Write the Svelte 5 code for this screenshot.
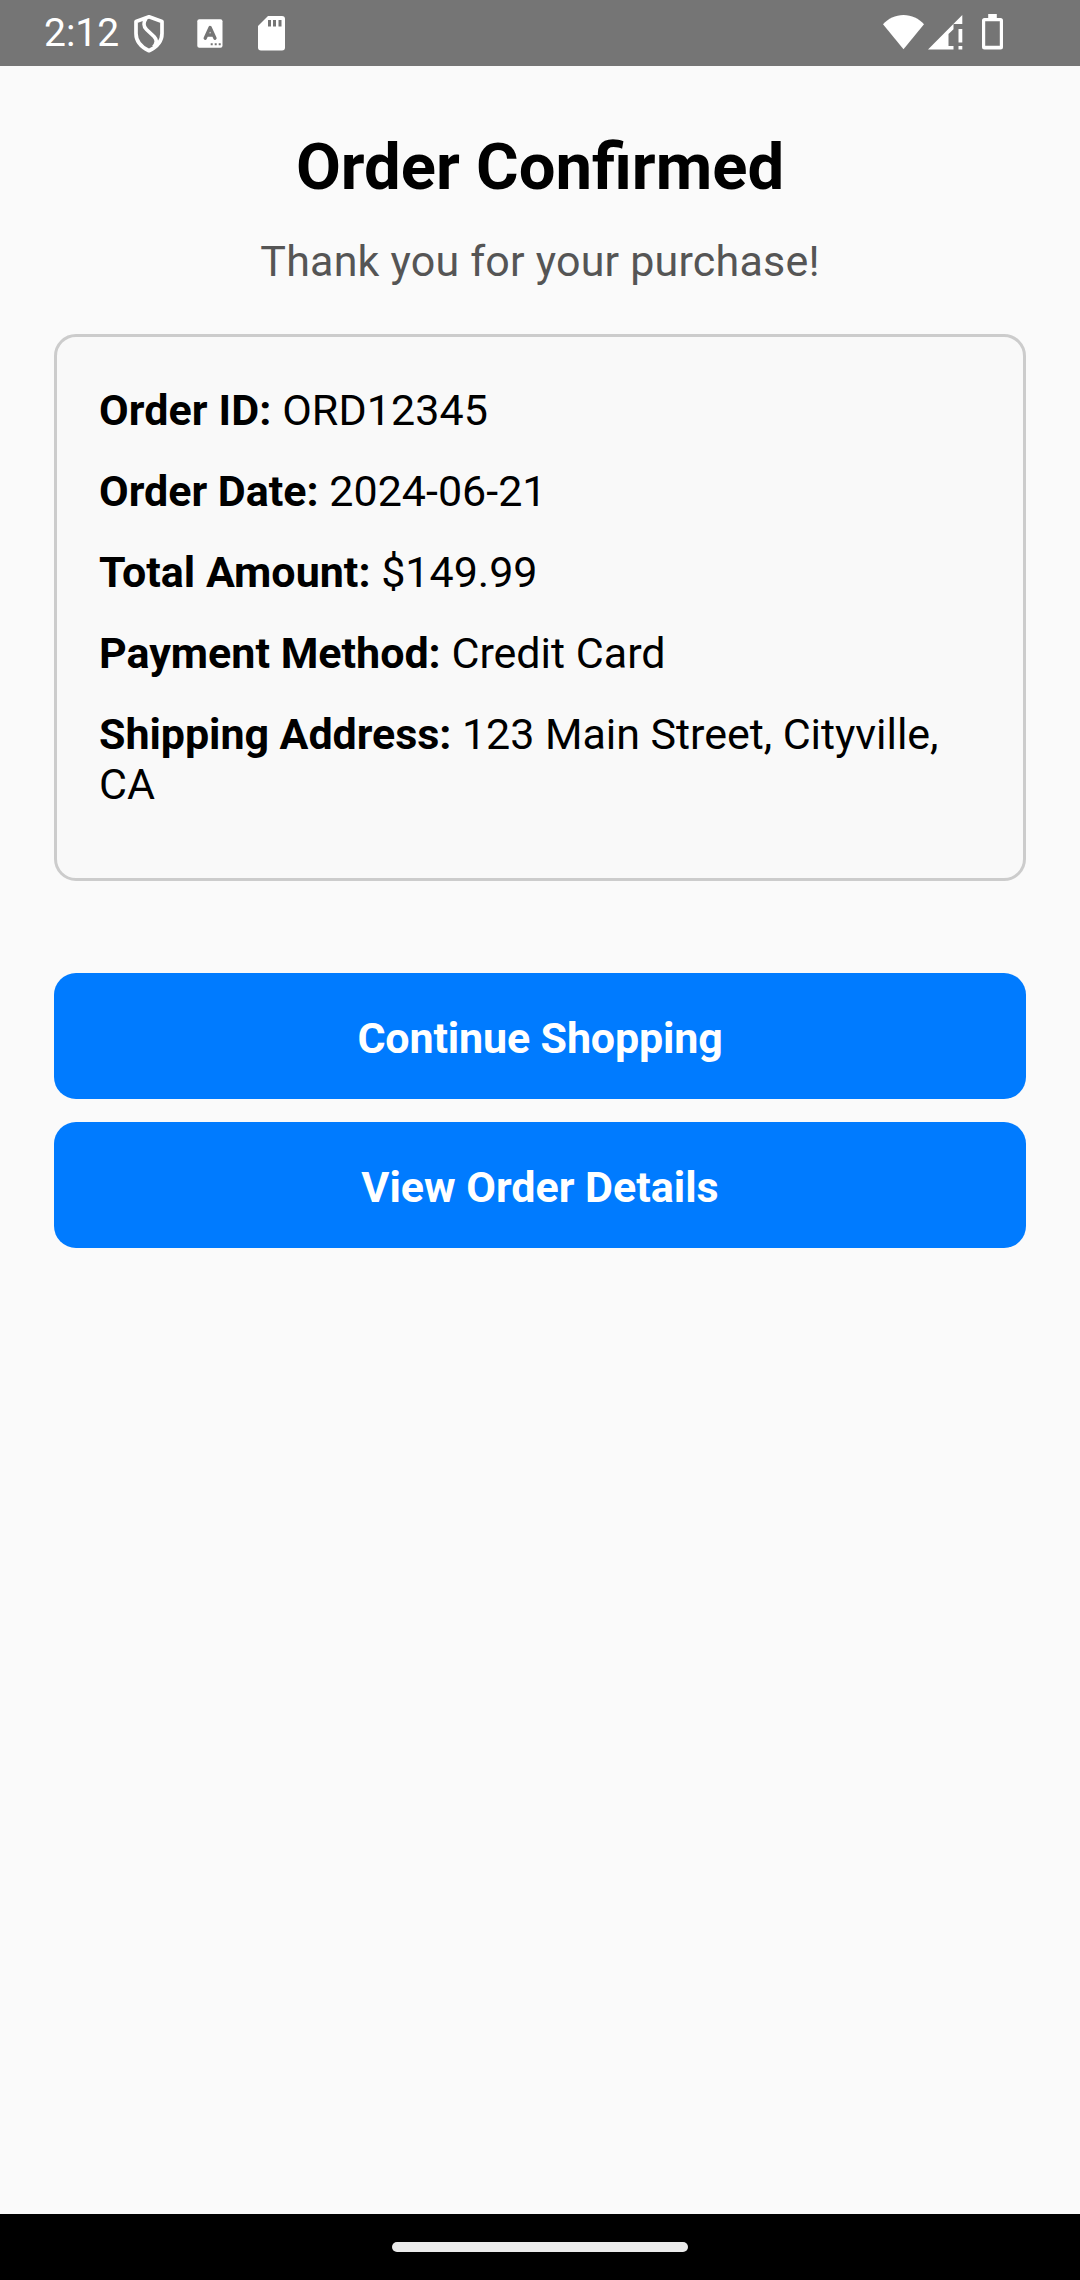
<script>
  const details = [
    { label: 'Order ID:', value: 'ORD12345' },
    { label: 'Order Date:', value: '2024-06-21' },
    { label: 'Total Amount:', value: '$149.99' },
    { label: 'Payment Method:', value: 'Credit Card' },
    { label: 'Shipping Address:', value: '123 Main Street, Cityville, CA' }
  ];
  const actions = ['Continue Shopping', 'View Order Details'];
</script>

<div class="screen">
  <header class="status">
    <div class="left">
      <span class="time">2:12</span>
      <svg class="shield" width="32" height="40" viewBox="0 0 32 40" fill="none" stroke="#fff" stroke-width="3.700" stroke-linejoin="round">
        <path d="M16 3.800 29 8.500v12c0 7.500-5 13.500-13 17.200C8 34 3 28 3 20.500v-12Z" />
        <path d="M13 5.500c-2.500 3.500-2.800 8 .5 11l7.500 7c3.500 3.500 3 7-.5 10.500" />
      </svg>
      <svg class="keyboard" width="26" height="30" viewBox="0 0 26 30">
        <rect x=".3" y=".3" width="25.200" height="28.400" rx="2" fill="#fff" />
        <path d="M8.200 19.300 13.100 8.500 18 19.300M9.600 16h7" fill="none" stroke="#757575" stroke-width="3.300" stroke-linecap="round" stroke-linejoin="round" />
        <path d="M13.700 24.300h2v2h-2zM17.700 24.300h2v2h-2zM21.700 24.300h2v2h-2z" fill="#757575" />
      </svg>
      <svg class="sd" width="27" height="35" viewBox="0 0 27 35">
        <path d="M10 0h14a3 3 0 0 1 3 3v28.500a3 3 0 0 1-3 3H3a3 3 0 0 1-3-3V10Z" fill="#fff" />
        <path d="M10 4h3v6.500h-3zM15 4h3v6.500h-3zM20.500 4h3v6.500h-3z" fill="#757575" />
      </svg>
    </div>
    <div class="right">
      <svg class="wifi" width="41" height="35" viewBox="0 0 41 35">
        <path d="M0 9.300C5 3.500 12.500 0 20.500 0S36 3.500 41 9.300L20.500 34.300Z" fill="#fff" />
      </svg>
      <svg class="signal" width="35" height="35" viewBox="0 0 35 35" fill="#fff">
        <path d="M34.300 0v9H25.500v5.200l-5 4.800v12H25.500v3.500H0ZM30.500 14h3.800v13.500h-3.800zM30.500 31h3.800v3.500h-3.800z" />
      </svg>
      <svg class="battery" width="21" height="36" viewBox="0 0 21 36">
        <path d="M6.200 0h8.600v4H18.500a2.500 2.500 0 0 1 2.500 2.500V33a2.500 2.500 0 0 1-2.500 2.500h-16A2.500 2.500 0 0 1 0 33V6.500A2.500 2.500 0 0 1 2.500 4h3.700ZM3.200 7.300v24.500h14.600v-24.500Z" fill="#fff" fill-rule="evenodd" />
      </svg>
    </div>
  </header>

  <main>
    <h1>Order Confirmed</h1>
    <p class="thanks">Thank you for your purchase!</p>
    <section class="card">
      {#each details as item}
        <p><strong>{item.label}</strong> {item.value}</p>
      {/each}
    </section>
    <div class="actions">
      {#each actions as action}
        <button type="button">{action}</button>
      {/each}
    </div>
  </main>

  <footer><div class="pill"></div></footer>
</div>

<style>
  :global(body) { margin: 0; }
  .screen {
    width: 1080px;
    height: 2280px;
    display: flex;
    flex-direction: column;
    background: #fafafa;
    color: #000;
    font-family: Roboto, sans-serif;
    font-size: 43px;
  }
  .status {
    box-sizing: border-box;
    height: 66px;
    padding: 0 77px 0 44px;
    display: flex;
    justify-content: space-between;
    align-items: flex-start;
    background: #757575;
  }
  .left, .right { display: flex; align-items: flex-start; }
  svg { display: block; flex: none; }
  .time {
    width: 89px;
    padding-top: 10px;
    color: #fff;
    font-size: 39px;
    line-height: 46px;
  }
  .shield { margin-top: 13px; }
  .keyboard { margin: 19px 0 0 32px; }
  .sd { margin: 16px 0 0 35px; }
  .wifi { margin-top: 15px; }
  .signal { margin: 15px 0 0 4px; }
  .battery { margin: 14px 0 0 19px; }
  main { flex: 1; padding: 62px 54px 0; }
  h1 {
    margin: 0;
    font-size: 65.2px;
    line-height: 78px;
    font-weight: 700;
    text-align: center;
  }
  .thanks {
    margin: 29px 0 47px;
    line-height: 52px;
    letter-spacing: 0.2px;
    color: #555;
    text-align: center;
  }
  .card {
    box-sizing: border-box;
    height: 547px;
    padding: 48px 42px 0;
    border: 3px solid #ccc;
    border-radius: 22px;
    background: #f9f9f9;
  }
  .card p { margin: 0 0 31px; line-height: 50px; }
  .card p:first-child { letter-spacing: 0.1px; }
  .card p:last-child { letter-spacing: -0.05px; }
  strong { font-weight: 700; }
  .actions {
    margin-top: 92px;
    display: flex;
    flex-direction: column;
    gap: 23px;
  }
  button {
    height: 126px;
    padding: 3px 0 0;
    border: 0;
    border-radius: 22px;
    background: #007bff;
    color: #fff;
    font: 700 43px/52px Roboto, sans-serif;
  }
  button:first-child { letter-spacing: -0.15px; }
  footer {
    height: 66px;
    display: flex;
    align-items: center;
    justify-content: center;
    background: #000;
  }
  .pill { width: 296px; height: 10px; border-radius: 5px; background: #ebebeb; }
</style>
